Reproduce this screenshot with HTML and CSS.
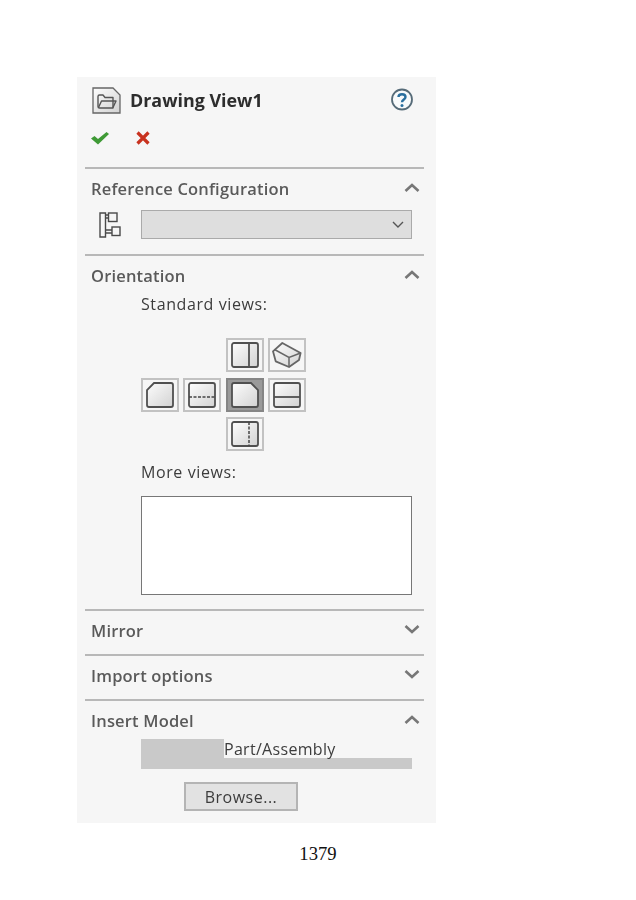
FILE: index.html
```html
<!DOCTYPE html>
<html lang="en">
<head>
    <meta charset="UTF-8">
    <meta name="viewport" content="width=device-width, initial-scale=1.0">
    <title>Drawing View1</title>
    <link rel="stylesheet" href="styles.css">
</head>
<body>
    <div class="panel">
        <div class="title-block">
            <div class="title-row">
                <svg class="doc-icon" width="29" height="27" viewBox="0 0 29 27">
                    <defs>
                        <linearGradient id="shade" x1="0" y1="0" x2="1" y2="1">
                            <stop offset="0" stop-color="#fdfdfd"/>
                            <stop offset="1" stop-color="#d2d2d2"/>
                        </linearGradient>
                    </defs>
                    <path d="M1 1H21L28 8V26H1Z" fill="url(#shade)" stroke="#666" stroke-width="1.300"/>
                    <path d="M6 9.500Q6 8 7.500 8H11L13 10.500H21V21H7.500Q6 21 6 19.500Z" fill="none" stroke="#555" stroke-width="1.400" stroke-linejoin="round"/>
                    <path d="M6.500 20.500L9.500 14H24L21 20.500" fill="none" stroke="#555" stroke-width="1.400" stroke-linejoin="round"/>
                </svg>
                <h1>Drawing View1</h1>
                <svg class="help-icon" width="24" height="24" viewBox="0 0 24 24">
                    <circle cx="12" cy="11.500" r="10" fill="#f8fafb" stroke="#566b78" stroke-width="1.800"/>
                    <path d="M8.500 9C8.500 5.300 15.500 5.300 15.500 9C15.500 11.500 12 11.500 12 14.300" fill="none" stroke="#2a6f9e" stroke-width="2.400"/>
                    <circle cx="12" cy="17.500" r="1.500" fill="#2a6f9e"/>
                </svg>
            </div>
            <div class="action-row">
                <svg width="18" height="14" viewBox="0 0 18 14"><path d="M0 7.500L3.500 5L7 8L15.500 1L18 3L7 13.500Z" fill="#3f9a36"/></svg>
                <svg width="14" height="14" viewBox="0 0 14 14"><path d="M1.500 1.500L12.500 12.500M12.500 1.500L1.500 12.500" fill="none" stroke="#c8321f" stroke-width="3.200"/></svg>
            </div>
        </div>

        <section class="section">
            <div class="section-head">
                <h2>Reference Configuration</h2>
                <svg class="chevron" width="16" height="9" viewBox="0 0 16 9"><path d="M1.500 8L8 2L14.500 8" fill="none" stroke="#777" stroke-width="2.600"/></svg>
            </div>
            <div class="config-row">
                <svg width="22" height="26" viewBox="0 0 22 26">
                    <path d="M1 1H6.500V25H1ZM6.500 3H10M6.500 6H10M6.500 18H13M6.500 21H13" fill="none" stroke="#4a4a4a" stroke-width="1.400"/>
                    <rect x="9.500" y="1" width="8.500" height="8.500" fill="#f6f6f6" stroke="#4a4a4a" stroke-width="1.400"/>
                    <rect x="13" y="15" width="8" height="8.500" fill="#f6f6f6" stroke="#4a4a4a" stroke-width="1.400"/>
                </svg>
                <div class="config-select">
                    <svg width="12" height="7" viewBox="0 0 12 7"><path d="M1 1L6 6L11 1" fill="none" stroke="#555" stroke-width="1.400"/></svg>
                </div>
            </div>
        </section>

        <section class="section orientation">
            <div class="section-head">
                <h2>Orientation</h2>
                <svg class="chevron" width="16" height="9" viewBox="0 0 16 9"><path d="M1.500 8L8 2L14.500 8" fill="none" stroke="#777" stroke-width="2.600"/></svg>
            </div>
            <div class="section-body">
                <div class="field-label">Standard views:</div>
                <div class="view-grid">
                    <div class="view-btn col-3">
                        <svg width="30" height="28" viewBox="0 0 30 28"><rect x="2" y="2" width="26" height="24" rx="2" fill="url(#shade)" stroke="#505050" stroke-width="1.800"/><path d="M19 2V26" stroke="#505050" stroke-width="1.800"/></svg>
                    </div>
                    <div class="view-btn">
                        <svg width="30" height="28" viewBox="0 0 30 28"><path d="M10.300 2L1 10.300L3.700 20.300L17 26L27 19L28.600 12Z" fill="url(#shade)" stroke="#666" stroke-width="1.800" stroke-linejoin="round"/><path d="M2.500 8.500L17 16.500L28.600 12M17 16.500V26" fill="none" stroke="#666" stroke-width="1.500"/></svg>
                    </div>
                    <div class="view-btn">
                        <svg width="30" height="28" viewBox="0 0 30 28"><path d="M9 2H26Q28 2 28 4V24Q28 26 26 26H4Q2 26 2 24V9Z" fill="url(#shade)" stroke="#505050" stroke-width="1.800"/></svg>
                    </div>
                    <div class="view-btn">
                        <svg width="30" height="28" viewBox="0 0 30 28"><rect x="2" y="2" width="26" height="24" rx="2" fill="url(#shade)" stroke="#505050" stroke-width="1.800"/><path d="M2 16H28" stroke="#444" stroke-width="1.500" stroke-dasharray="3 1.500"/></svg>
                    </div>
                    <div class="view-btn selected">
                        <svg width="30" height="28" viewBox="0 0 30 28"><path d="M2 4Q2 2 4 2H21L28 9V24Q28 26 26 26H4Q2 26 2 24Z" fill="url(#shade)" stroke="#505050" stroke-width="1.800"/></svg>
                    </div>
                    <div class="view-btn">
                        <svg width="30" height="28" viewBox="0 0 30 28"><rect x="2" y="2" width="26" height="24" rx="2" fill="url(#shade)" stroke="#505050" stroke-width="1.800"/><path d="M2 16H28" stroke="#505050" stroke-width="1.800"/></svg>
                    </div>
                    <div class="view-btn col-3">
                        <svg width="30" height="28" viewBox="0 0 30 28"><rect x="2" y="2" width="26" height="24" rx="2" fill="url(#shade)" stroke="#505050" stroke-width="1.800"/><path d="M19 2V26" stroke="#444" stroke-width="1.500" stroke-dasharray="3 1.500"/></svg>
                    </div>
                </div>
                <div class="field-label more-label">More views:</div>
                <div class="more-box"></div>
            </div>
        </section>

        <section class="section collapsed">
            <div class="section-head">
                <h2>Mirror</h2>
                <svg class="chevron" width="16" height="9" viewBox="0 0 16 9"><path d="M1.500 1L8 7L14.500 1" fill="none" stroke="#777" stroke-width="2.600"/></svg>
            </div>
        </section>

        <section class="section collapsed">
            <div class="section-head">
                <h2>Import options</h2>
                <svg class="chevron" width="16" height="9" viewBox="0 0 16 9"><path d="M1.500 1L8 7L14.500 1" fill="none" stroke="#777" stroke-width="2.600"/></svg>
            </div>
        </section>

        <section class="section">
            <div class="section-head">
                <h2>Insert Model</h2>
                <svg class="chevron" width="16" height="9" viewBox="0 0 16 9"><path d="M1.500 8L8 2L14.500 8" fill="none" stroke="#777" stroke-width="2.600"/></svg>
            </div>
            <div class="section-body">
                <div class="model-bar"><span class="model-label">Part/Assembly</span></div>
                <div class="browse-row"><button class="browse-btn">Browse...</button></div>
            </div>
        </section>
    </div>
    <div class="page-number">1379</div>
</body>
</html>
```

FILE: styles.css
```css
body {
    margin: 0;
    padding: 77px 0 0;
    background-color: #fff;
    font-family: "Open Sans", sans-serif;
}
.panel {
    width: 339px;
    margin-left: 77px;
    padding: 0 12px 12px 8px;
    background-color: #f6f6f6;
    filter: blur(0.35px);
}
.title-block {
    height: 90px;
}
.title-row {
    display: flex;
    align-items: center;
    height: 46px;
    padding: 0 10px 0 7px;
}
.doc-icon {
    margin-right: 9px;
}
h1 {
    flex: 1;
    margin: 0;
    font-size: 17.900px;
    font-weight: 700;
    color: #2d2d2d;
}
.help-icon {
    flex: none;
}
.action-row {
    display: flex;
    align-items: center;
    gap: 27px;
    height: 30px;
    padding-left: 6px;
}
.section {
    border-top: 2px solid #b8b8b8;
}
.section-head {
    display: flex;
    align-items: center;
    justify-content: space-between;
    height: 38px;
    padding: 0 4px 0 6px;
}
.chevron {
    margin-top: -2px;
}
h2 {
    margin: 0;
    font-size: 16.500px;
    font-weight: 600;
    letter-spacing: 0.180px;
    color: #5a5a5a;
}
.collapsed {
    padding-bottom: 5px;
}
.config-row {
    display: flex;
    align-items: center;
    gap: 20px;
    margin-top: 3px;
    padding: 0 12px 15px 14px;
}
.config-select {
    display: flex;
    align-items: center;
    justify-content: flex-end;
    flex: 1;
    height: 27px;
    padding-right: 7px;
    background-color: #dedede;
    border: 1px solid #aaa;
}
.section-body {
    padding: 0 12px 0 56px;
}
.orientation .section-body {
    padding-bottom: 14px;
}
.field-label {
    height: 20px;
    font-size: 16px;
    font-weight: 500;
    letter-spacing: 0.600px;
    line-height: 20px;
    color: #3c3c3c;
}
.view-grid {
    display: grid;
    grid-template-columns: repeat(4, 38px);
    grid-auto-rows: 34px;
    column-gap: 4.300px;
    row-gap: 5.500px;
    margin-top: 24px;
}
.view-btn {
    display: flex;
    align-items: center;
    justify-content: center;
    box-sizing: border-box;
    border: 2px solid #c2c2c2;
}
.col-3 {
    grid-column: 3;
}
.selected {
    background-color: #9a9a9a;
    border-color: #858585;
}
.more-label {
    margin-top: 11px;
}
.more-box {
    box-sizing: border-box;
    height: 99px;
    margin-top: 14px;
    background-color: #fff;
    border: 1px solid #777;
}
.model-bar {
    height: 30px;
    background-color: #c9c9c9;
}
.model-label {
    display: block;
    height: 19px;
    margin-left: 83px;
    font-size: 16px;
    font-weight: 500;
    letter-spacing: 0.300px;
    line-height: 20px;
    color: #3c3c3c;
    background-color: #f6f6f6;
}
.browse-row {
    margin-top: 13px;
    padding-left: 43px;
}
.browse-btn {
    box-sizing: border-box;
    width: 114px;
    height: 29px;
    padding: 0;
    font-family: "Open Sans", sans-serif;
    font-size: 16px;
    font-weight: 500;
    letter-spacing: 0.500px;
    color: #3c3c3c;
    background-color: #e2e2e2;
    border: 2px solid #b4b4b4;
}
.page-number {
    margin-top: 20px;
    font-family: "Liberation Serif", serif;
    font-size: 18.670px;
    line-height: 22px;
    text-align: center;
    color: #111;
}
```
